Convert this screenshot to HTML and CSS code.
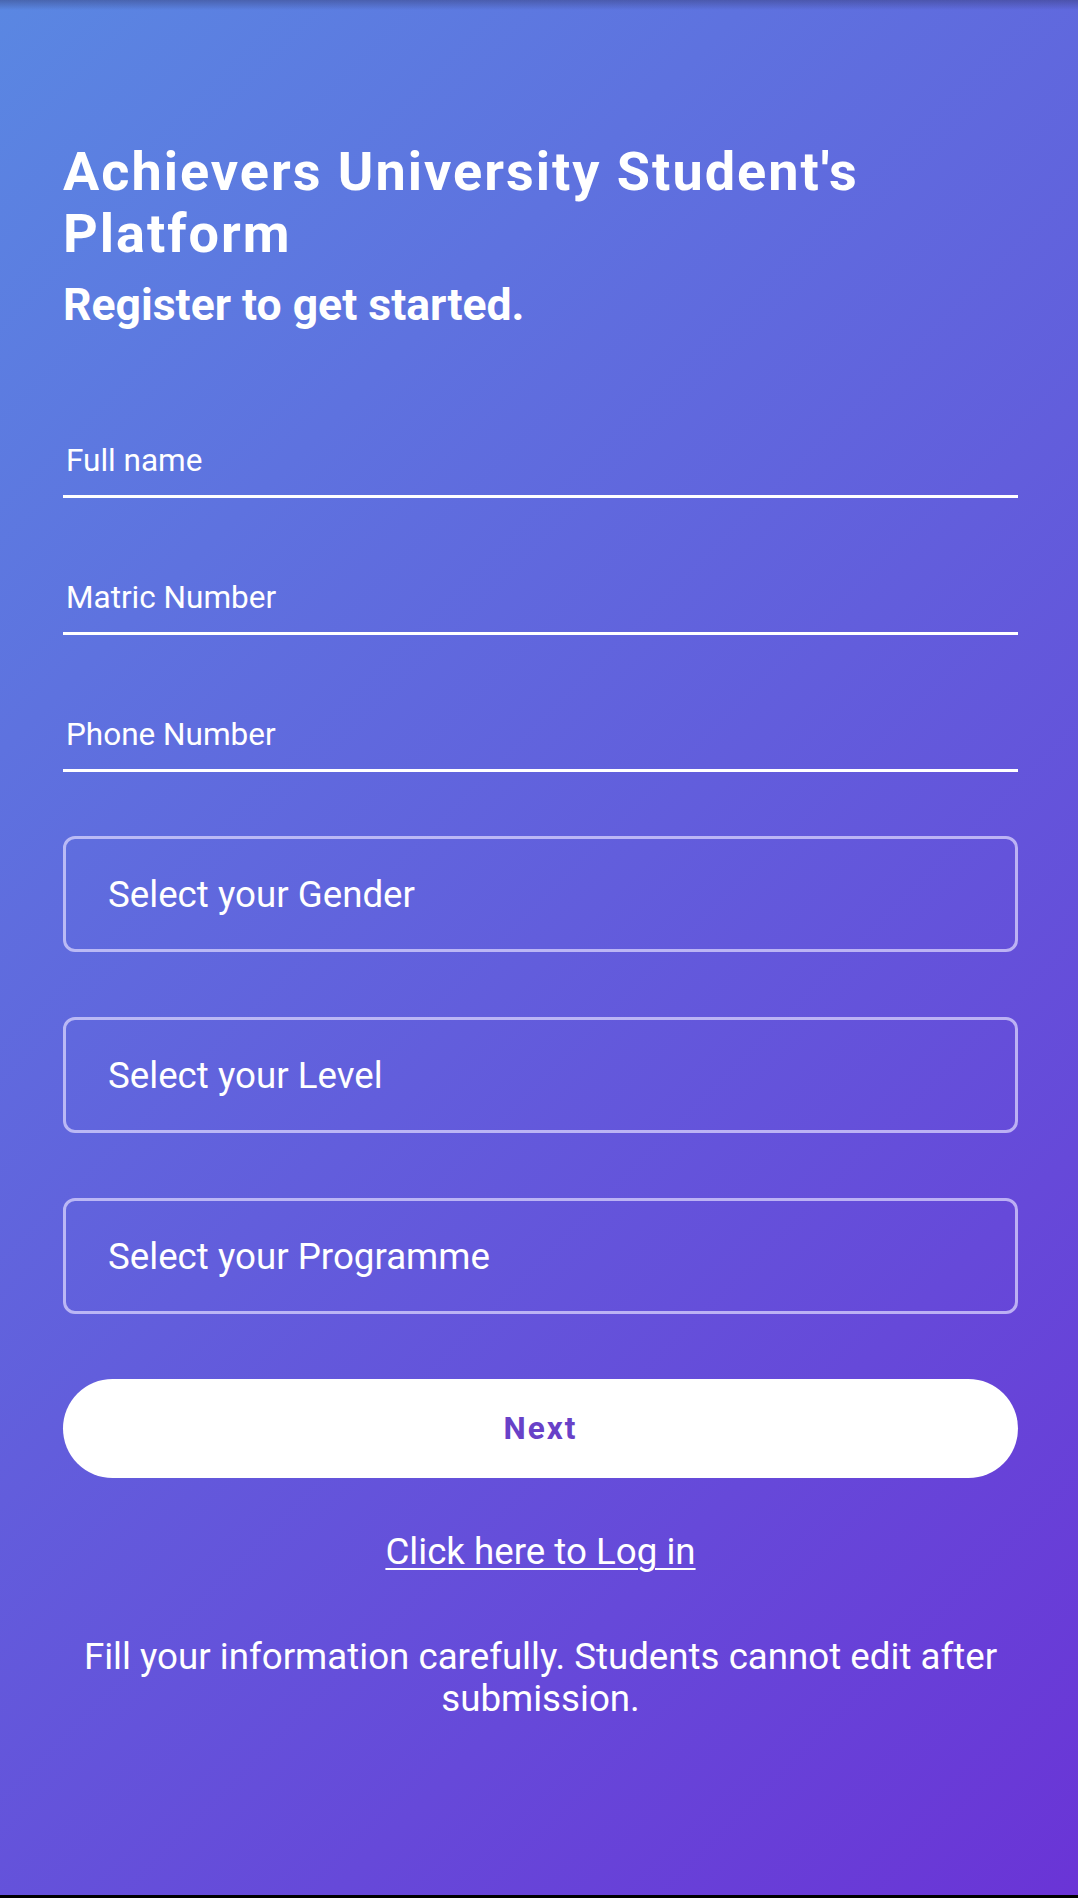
FILE: index.html
```html
<!DOCTYPE html>
<html lang="en">
<head>
<meta charset="utf-8">
<title>Register</title>
<link rel="stylesheet" href="styles.css">
</head>
<body>
<div class="screen">
  <div class="topshade"></div>
  <main class="content">
    <h1 class="title">Achievers University Student's Platform</h1>
    <h2 class="subtitle">Register to get started.</h2>

    <div class="form">
      <div class="line-field"><span class="label">Full name</span></div>
      <div class="line-field"><span class="label">Matric Number</span></div>
      <div class="line-field last"><span class="label">Phone Number</span></div>

      <div class="select-box">Select your Gender</div>
      <div class="select-box">Select your Level</div>
      <div class="select-box">Select your Programme</div>

      <button class="next-btn">Next</button>

      <a class="login-link" href="#">Click here to Log in</a>

      <p class="note">Fill your information carefully. Students cannot edit after submission.</p>
    </div>
  </main>
  <div class="bottombar"></div>
</div>
</body>
</html>
```

FILE: styles.css
```css
html, body {
  margin: 0;
  padding: 0;
}

body {
  font-family: Roboto, "Noto Sans", "Liberation Sans", sans-serif;
  color: #ffffff;
}

.screen {
  width: 1078px;
  height: 1898px;
  display: flex;
  flex-direction: column;
  background: linear-gradient(135deg, #5a87e2 0%, #6a34d6 100%);
  position: relative;
  overflow: hidden;
}

.topshade {
  position: absolute;
  top: 0;
  left: 0;
  right: 0;
  height: 10px;
  background: linear-gradient(to bottom, rgba(40, 40, 80, 0.35), rgba(40, 40, 80, 0));
}

.content {
  flex: 1;
  padding: 141px 60px 0 63px;
}

.title {
  margin: 0;
  font-size: 54px;
  line-height: 62px;
  font-weight: 700;
  letter-spacing: 2px;
}

.subtitle {
  margin: 15px 0 0 0;
  font-size: 44.5px;
  line-height: 50px;
  font-weight: 700;
}

.form {
  margin-top: 112px;
  display: flex;
  flex-direction: column;
}

.line-field {
  height: 53px;
  border-bottom: 3px solid #ffffff;
  margin-bottom: 81px;
  padding-left: 3px;
  display: flex;
  align-items: flex-start;
}

.line-field.last {
  margin-bottom: 64px;
}

.label {
  font-size: 31.5px;
  line-height: 37px;
}

.select-box {
  height: 110px;
  border: 3px solid rgba(225, 220, 255, 0.7);
  border-radius: 12px;
  padding-left: 42px;
  display: flex;
  align-items: center;
  font-size: 36.7px;
  margin-bottom: 65px;
}

.next-btn {
  height: 99px;
  border: none;
  border-radius: 50px;
  background: #ffffff;
  color: #6841c8;
  font-family: Roboto, "Noto Sans", "Liberation Sans", sans-serif;
  font-weight: 700;
  font-size: 31.5px;
  letter-spacing: 2px;
  padding: 0;
  margin: 0;
}

.login-link {
  align-self: center;
  margin-top: 53px;
  font-size: 36.7px;
  line-height: 42px;
  color: #ffffff;
  text-decoration: underline;
  text-underline-offset: 4px;
  text-decoration-thickness: 2px;
}

.note {
  margin: 63px 0 0 0;
  font-size: 36.7px;
  line-height: 42px;
  text-align: center;
}

.bottombar {
  height: 3px;
  background: #000000;
}
```
